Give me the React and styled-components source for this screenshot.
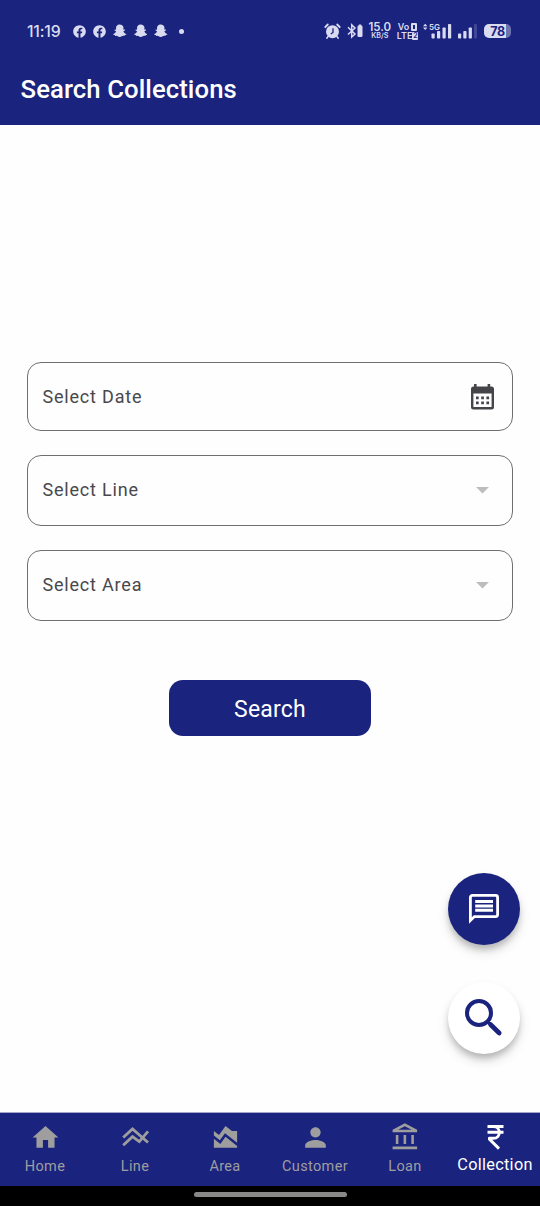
import React, { useState } from "react";
import styled, { createGlobalStyle } from "styled-components";
import {
  MdHome,
  MdAreaChart,
  MdPerson,
  MdOutlineAccountBalance,
  MdArrowDropDown,
} from "react-icons/md";
import { FaFacebook, FaSnapchatGhost } from "react-icons/fa";

const GlobalStyle = createGlobalStyle`
  * {
    box-sizing: border-box;
  }
  body {
    margin: 0;
    background: #fff;
    font-family: Roboto, sans-serif;
  }
  svg {
    display: block;
    flex-shrink: 0;
  }
`;

const Screen = styled.div`
  position: relative;
  display: flex;
  flex-direction: column;
  width: 540px;
  height: 1206px;
  background: #fefefe;
  overflow: hidden;
`;

const Header = styled.header`
  height: 125px;
  background: #1a237e;
  color: #fff;
`;

const StatusBar = styled.div`
  display: flex;
  justify-content: space-between;
  align-items: center;
  height: 62px;
  padding: 0 29px 0 27px;
  color: #d9dbf0;
  font-family: Inter, sans-serif;
`;

const StatusGroup = styled.div`
  display: flex;
  align-items: center;
  gap: ${({ $gap }) => $gap}px;
`;

const Clock = styled.span`
  width: 39px;
  font-size: 15.8px;
  font-weight: 500;
  letter-spacing: -0.2px;
`;

const Dot = styled.span`
  width: 5px;
  height: 5px;
  margin-left: 4px;
  border-radius: 50%;
  background: currentColor;
`;

const Stacked = styled.div`
  display: flex;
  flex-direction: column;
  align-items: center;
  width: ${({ $width }) => $width}px;
  font-weight: 600;
  white-space: nowrap;
`;

const StackedLine = styled.span`
  height: ${({ $height }) => $height}px;
  font-size: ${({ $size }) => $size}px;
  line-height: ${({ $height }) => $height}px;
`;

const VolteRow = styled.span`
  display: flex;
  align-items: center;
  gap: ${({ $gap }) => $gap}px;
  height: 9px;
  font-size: 9px;
  line-height: 9px;
`;

const SimBadge = styled.i`
  width: 6px;
  height: 8px;
  border: ${({ $filled }) => ($filled ? 0 : "2px solid #d9dbf0")};
  border-radius: 1px;
  background: ${({ $filled }) => ($filled ? "#d9dbf0" : "transparent")};
  color: #1a237e;
  font-size: 7px;
  font-style: normal;
  line-height: 8px;
  text-align: center;
`;

const Battery = styled.div`
  display: flex;
  align-items: center;
  justify-content: center;
  width: 27px;
  height: 14px;
  margin-left: 2px;
  border-radius: 5px;
  background: linear-gradient(90deg, #d9dbf0 80%, #6d73ae 80%);
  color: #1a237e;
  font-size: 12.5px;
  font-weight: 700;
  letter-spacing: -0.3px;
`;

const Title = styled.h1`
  margin: 0;
  padding: 11px 0 0 20.5px;
  font-size: 25.7px;
  line-height: 32px;
  font-weight: 500;
  letter-spacing: 0.08px;
`;

const Main = styled.main`
  flex: 1;
  display: flex;
  flex-direction: column;
  align-items: center;
  padding: 237px 27px 0;
  border-bottom: 1px solid #a3a7cb;
`;

const Field = styled.button`
  display: flex;
  align-items: center;
  justify-content: space-between;
  width: 100%;
  height: ${({ $height }) => $height}px;
  margin: 0 0 24px;
  padding: 0 14px ${({ $lift }) => $lift}px 14.5px;
  border: 1px solid #6f6e73;
  border-radius: 14px;
  background: transparent;
  color: #49484d;
  font-family: inherit;
  font-size: 18px;
  letter-spacing: 0.8px;
`;

const SearchButton = styled.button`
  width: 202px;
  height: 56px;
  margin-top: 35px;
  padding: 2px 0 0;
  border: 0;
  border-radius: 14px;
  background: #1a237e;
  color: #fff;
  font-family: inherit;
  font-size: 23px;
  font-weight: 400;
  letter-spacing: 0.2px;
`;

const Fab = styled.button`
  position: absolute;
  right: 20px;
  bottom: ${({ $bottom }) => $bottom}px;
  display: flex;
  align-items: center;
  justify-content: center;
  width: 72px;
  height: 72px;
  padding: 0;
  border: 0;
  border-radius: 50%;
  background: ${({ $light }) => ($light ? "#fff" : "#1a237e")};
  color: ${({ $light }) => ($light ? "#1a237e" : "#fff")};
  box-shadow: 0 5px 6px -1px rgba(0, 0, 0, 0.2), 0 7px 12px rgba(0, 0, 0, 0.13);
`;

const BottomNav = styled.nav`
  display: flex;
  height: 73px;
  background: #1a237e;
`;

const NavItem = styled.button`
  display: flex;
  flex: 0 0 90px;
  flex-direction: column;
  align-items: center;
  padding: 9px 0 0;
  border: 0;
  background: none;
  color: ${({ $active }) => ($active ? "#fff" : "#9e9e9e")};
  font-family: inherit;
  font-size: ${({ $active }) => ($active ? 16.3 : 14.5)}px;
  letter-spacing: ${({ $active }) => ($active ? 0.3 : 0.35)}px;
  white-space: nowrap;

  span {
    margin-top: ${({ $active }) => ($active ? 2 : 4)}px;
    line-height: 20px;
  }
`;

const GestureBar = styled.div`
  display: flex;
  justify-content: center;
  height: 20px;
  padding-top: 6px;
  background: #000;

  &::after {
    content: "";
    width: 153px;
    height: 5px;
    border-radius: 3px;
    background: #888;
  }
`;

const AlarmIcon = () => (
  <svg width="17" height="17" viewBox="0 0 17 17">
    <circle cx="8.5" cy="8.7" r="6.5" fill="currentColor" />
    <path d="M1.3 4 3.8 1.5M15.7 4l-2.5-2.5" stroke="currentColor" strokeWidth="1.8" strokeLinecap="round" />
    <path d="m4 13.5-1.2 1.7M13 13.5l1.2 1.7" stroke="currentColor" strokeWidth="1.5" strokeLinecap="round" />
    <path d="M9 5.3v4.2L6.8 11" fill="none" stroke="#1a237e" strokeWidth="1.3" />
  </svg>
);

const BluetoothIcon = () => (
  <svg width="16" height="16" viewBox="0 0 16 16">
    <path d="M1 4.3 8 11 4.7 14V1.8L8 5 1 11.5" fill="none" stroke="currentColor" strokeWidth="1.5" />
    <rect x="10.5" y="2.5" width="5" height="11.5" rx="1.3" fill="currentColor" />
    <rect x="11.8" y="1.5" width="2.4" height="2" fill="currentColor" />
  </svg>
);

const MobileSignal = () => (
  <svg width="29" height="18" viewBox="0 0 29 18" fill="currentColor">
    <path d="M0 4.2 2.2 1.7l2.2 2.5zM0 5.6h4.4L2.2 8.1z" />
    <text x="6" y="7.5" fontSize="8" fontWeight="600" fontFamily="Inter, sans-serif">
      5G
    </text>
    <rect x="8.5" y="11.5" width="3.2" height="5" rx=".8" />
    <rect x="14" y="9" width="3.2" height="7.5" rx=".8" />
    <rect x="19.5" y="5.5" width="3.2" height="11" rx=".8" />
    <rect x="25" y="2" width="3.2" height="14.5" rx=".8" />
  </svg>
);

const SimSignal = () => (
  <svg width="19" height="18" viewBox="0 0 19 18" fill="currentColor">
    <rect x="0" y="11.5" width="3.2" height="5" rx=".8" />
    <rect x="5.3" y="9" width="3.2" height="7.5" rx=".8" />
    <rect x="10.7" y="5.5" width="3.2" height="11" rx=".8" />
    <rect x="16" y="2" width="3" height="14.5" rx=".8" opacity=".2" />
  </svg>
);

const CalendarIcon = () => (
  <svg width="32" height="32" viewBox="0 0 32 32" fill="#454449">
    <path
      d="M8 4h2.6v2.5h11V4h2.6v2.5h1.3A2.5 2.5 0 0 1 28 9v18a2.5 2.5 0 0 1-2.5 2.5h-18A2.5 2.5 0 0 1 5 27V9a2.5 2.5 0 0 1 2.500-2.500H8zM7.400 13.500v13.500h18.200V13.500z"
      fillRule="evenodd"
    />
    {[10, 15.2, 20.4].map((x) => (
      <path key={x} d={`M${x} 16.5h2.7v2.7h-2.7zM${x} 21.6h2.7v2.7h-2.7z`} />
    ))}
  </svg>
);

const ChatIcon = () => (
  <svg width="32" height="32" viewBox="0 0 32 32" fill="none" stroke="currentColor">
    <path
      d="M2.4 27.5V4.4a2 2 0 0 1 2-2h23.2a2 2 0 0 1 2 2v17.2a2 2 0 0 1-2 2H6.400z"
      strokeWidth="2.8"
    />
    <path d="M7.2 8.5h17.800M7.2 12.900h17.800M7.2 17.300h17.800" strokeWidth="3" />
  </svg>
);

const MagnifierIcon = () => (
  <svg width="40" height="40" viewBox="0 0 40 40" fill="none" stroke="currentColor">
    <circle cx="15" cy="15" r="12" strokeWidth="4" />
    <path d="m23.5 23.5 4 4" strokeWidth="3" />
    <path d="m26.5 26.5 8.7 8.5" strokeWidth="4.7" strokeLinecap="round" />
  </svg>
);

const LineIcon = () => (
  <svg width="31" height="31" viewBox="0 0 31 31" fill="none" stroke="currentColor" strokeWidth="2.8">
    <path d="m3.2 15.5 9.3-8.6L28 20.500" />
    <path d="m3.2 23.2 9.3-8.6 6.800 5L28 9.300" />
  </svg>
);

const RupeeIcon = () => (
  <svg width="31" height="31" viewBox="0 0 31 31" fill="none" stroke="currentColor" strokeWidth="2.9">
    <path d="M7.5 4.500h16M7.500 10.300h16" />
    <path d="M9 4.500h4.500c7.700 0 7.700 11.800 0 11.800H9.400v.8l9.600 9.500" strokeLinejoin="round" />
  </svg>
);

const navItems = [
  { label: "Home", Icon: MdHome },
  { label: "Line", Icon: LineIcon },
  { label: "Area", Icon: MdAreaChart },
  { label: "Customer", Icon: MdPerson },
  { label: "Loan", Icon: MdOutlineAccountBalance },
  { label: "Collection", Icon: RupeeIcon },
];

const App = () => {
  const [active, setActive] = useState("Collection");

  return (
    <>
      <GlobalStyle />
      <Screen>
        <Header>
          <StatusBar>
            <StatusGroup $gap={7}>
              <Clock>11:19</Clock>
              <FaFacebook size={13} />
              <FaFacebook size={13} />
              <FaSnapchatGhost size={13.5} />
              <FaSnapchatGhost size={13.5} />
              <FaSnapchatGhost size={13.5} />
              <Dot />
            </StatusGroup>
            <StatusGroup $gap={5.3}>
              <AlarmIcon />
              <BluetoothIcon />
              <Stacked $width={24}>
                <StackedLine $size={11.5} $height={10}>15.0</StackedLine>
                <StackedLine $size={7.2} $height={8}>KB/S</StackedLine>
              </Stacked>
              <Stacked $width={21}>
                <VolteRow $gap={2}>
                  Vo <SimBadge />
                </VolteRow>
                <VolteRow $gap={0}>
                  LTE<SimBadge $filled>2</SimBadge>
                </VolteRow>
              </Stacked>
              <MobileSignal />
              <SimSignal />
              <Battery>78</Battery>
            </StatusGroup>
          </StatusBar>
          <Title>Search Collections</Title>
        </Header>
        <Main>
          <Field $height={69} $lift={1}>
            Select Date
            <CalendarIcon />
          </Field>
          <Field $height={71} $lift={2}>
            Select Line
            <MdArrowDropDown size={31} color="#bdbdbd" />
          </Field>
          <Field $height={71} $lift={2}>
            Select Area
            <MdArrowDropDown size={31} color="#bdbdbd" />
          </Field>
          <SearchButton>Search</SearchButton>
        </Main>
        <Fab $bottom={261.5} aria-label="Messages">
          <ChatIcon />
        </Fab>
        <Fab $bottom={152} $light aria-label="Search">
          <MagnifierIcon />
        </Fab>
        <BottomNav>
          {navItems.map(({ label, Icon }) => (
            <NavItem key={label} $active={label === active} onClick={() => setActive(label)}>
              <Icon size={31} />
              <span>{label}</span>
            </NavItem>
          ))}
        </BottomNav>
        <GestureBar />
      </Screen>
    </>
  );
};

export default App;
